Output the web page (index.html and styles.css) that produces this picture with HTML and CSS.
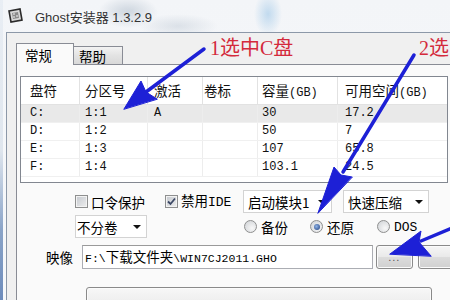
FILE: index.html
```html
<!DOCTYPE html>
<html lang="zh-CN">
<head>
  <meta charset="UTF-8" />
  <title>Ghost安装器 1.3.2.9</title>
  <link rel="stylesheet" href="styles.css">
</head>
<body>

<div class="window">
  <div class="titlebar">
    <svg class="app-icon" width="17" height="16" viewBox="0 0 17 16">
      <path d="M2 3 L13 1 L15 12 L4 14 Z" fill="#d8d8d8" stroke="#2b2b2b" stroke-width="1.6"/>
      <path d="M5 5 L11 4 L12 10 L6 11 Z" fill="#8a8a8a"/>
      <path d="M6 6 L8 6 M9 8 L11 8 M6 9 L8 9" stroke="#f2f2f2" stroke-width="1"/>
    </svg>
    <span class="title">Ghost安装器 1.3.2.9</span>
  </div>

  <div class="client">
    <div class="tabs">
      <div class="tab active">常规</div>
      <div class="tab">帮助</div>
    </div>

    <div class="page">
      <!-- 分区列表 -->
      <div class="list">
        <div class="lv-row lv-head">
          <div class="cell">盘符</div>
          <div class="cell">分区号</div>
          <div class="cell">激活</div>
          <div class="cell">卷标</div>
          <div class="cell">容量<span class="gb">(GB)</span></div>
          <div class="cell">可用空间<span class="gb">(GB)</span></div>
        </div>
        <div class="lv-row sel">
          <div class="cell">C:</div><div class="cell">1:1</div><div class="cell">A</div>
          <div class="cell"></div><div class="cell">30</div><div class="cell">17.2</div>
        </div>
        <div class="lv-row">
          <div class="cell">D:</div><div class="cell">1:2</div><div class="cell"></div>
          <div class="cell"></div><div class="cell">50</div><div class="cell">7</div>
        </div>
        <div class="lv-row">
          <div class="cell">E:</div><div class="cell">1:3</div><div class="cell"></div>
          <div class="cell"></div><div class="cell">107</div><div class="cell">65.8</div>
        </div>
        <div class="lv-row">
          <div class="cell">F:</div><div class="cell">1:4</div><div class="cell"></div>
          <div class="cell"></div><div class="cell">103.1</div><div class="cell">24.5</div>
        </div>
      </div>

      <!-- 选项 -->
      <div class="opts">
        <div class="line line-1">
          <label class="check-item w-pw"><span class="chk"></span><span class="txt">口令保护</span></label>
          <label class="check-item w-ide">
            <span class="chk">
              <svg width="9" height="9" viewBox="0 0 9 9"><path d="M1 4.5 L3.5 7 L8 1.5" fill="none" stroke="#3d4966" stroke-width="1.8"/></svg>
            </span>
            <span class="txt">禁用<span class="mono tall">IDE</span></span>
          </label>
          <div class="combo w-boot"><span>启动模块1</span><i class="caret"></i></div>
          <div class="combo w-zip"><span>快速压缩</span><i class="caret"></i></div>
        </div>

        <div class="line line-2">
          <div class="combo w-vol"><span>不分卷</span><i class="caret"></i></div>
          <label class="radio-item w-bak"><span class="radio"></span><span class="txt">备份</span></label>
          <label class="radio-item w-res"><span class="radio on"></span><span class="txt">还原</span></label>
          <label class="radio-item"><span class="radio"></span><span class="txt"><span class="mono tall">DOS</span></span></label>
        </div>

        <div class="line line-3">
          <span class="img-label">映像</span>
          <div class="path"><span class="txt"><span class="mono">F:\</span>下载文件夹<span class="mono">\WIN7CJ2011.GHO</span></span></div>
          <button class="btn btn-browse">...</button>
          <button class="btn btn-more"></button>
        </div>

        <div class="line line-4">
          <button class="btn btn-big"></button>
        </div>
      </div>
    </div>
  </div>

  <!-- 标注 -->
  <div class="note note-1">1选中C盘</div>
  <div class="note note-2">2选</div>
  <svg class="arrows" width="450" height="300" viewBox="0 0 450 300">
    <g stroke="#1d20d6" stroke-width="3.5" stroke-linecap="round" fill="#1d20d6">
      <line x1="204" y1="49" x2="146" y2="92"/>
      <polygon stroke-width="1" points="124,109 141,81 146,92 157,99"/>
      <line x1="414" y1="55" x2="343" y2="172"/>
      <polygon stroke-width="1" points="318,213 334,167 341,175 352,177"/>
      <line x1="452" y1="228" x2="421" y2="241"/>
      <polygon stroke-width="1" points="390,254 421,231 419,242 431,256"/>
    </g>
  </svg>
</div>

</body>
</html>
```

FILE: styles.css
```css
* {
  box-sizing: border-box;
}

body {
  margin: 0;
  font-family: "Noto Sans CJK SC", sans-serif;
  font-size: 13.5px;
  color: #000;
}

.window {
  position: relative;
  width: 450px;
  height: 300px;
  overflow: hidden;
  background:
    linear-gradient(to bottom, #e9eef4 0, #dfe6ee 150px, #8aa4c8 230px, #6d8cbc 300px) 0 0 / 3px 300px no-repeat,
    radial-gradient(ellipse 30px 16px at 128px 12px, rgba(165, 180, 196, 0.5), transparent),
    radial-gradient(ellipse 14px 22px at 268px 14px, rgba(160, 200, 232, 0.6), transparent),
    radial-gradient(ellipse 40px 12px at 178px 26px, rgba(190, 200, 212, 0.45), transparent),
    linear-gradient(to bottom, #f3f5f8, #f7f9fb);
}

.titlebar {
  height: 32px;
  display: flex;
  align-items: center;
  padding-left: 7px;
  gap: 11px;
}

.title {
  font-family: "Liberation Sans", "Noto Sans CJK SC", sans-serif;
  font-size: 13px;
  color: #333;
  text-shadow: 0 0 6px #fff;
}

.client {
  margin-left: 6px;
  height: 268px;
  border-left: 1px solid #8c98a8;
  border-top: 1px solid #8c98a8;
  background-color: #f0f0f0;
  padding: 10px 0 0 9px;
}

.tabs {
  display: flex;
  align-items: flex-end;
  height: 22px;
  margin-bottom: -1px;
  position: relative;
}

.tab {
  height: 18px;
  width: 50px;
  margin-bottom: 1px;
  margin-left: -1px;
  padding-left: 5px;
  border: 1px solid #898c95;
  border-bottom: none;
  background: linear-gradient(to bottom, #f3f3f3, #e3e3e3 50%, #d9d9d9);
  font-size: 13.5px;
  line-height: 18px;
}

.tab.active {
  height: 22px;
  width: 58px;
  margin: 0;
  padding-left: 8px;
  background: #fafafa;
  line-height: 22px;
  position: relative;
  z-index: 1;
}

.page {
  width: 440px;
  height: 250px;
  border: 1px solid #898c95;
  background-color: #fafafa;
  padding: 11px 0 0 3px;
}

/* 列表 */
.list {
  width: 428px;
  height: 107px;
  border: 1px solid #828790;
  background-color: #fff;
}

.lv-row {
  display: grid;
  grid-template-columns: 58px 68px 55px 55px 80px 1fr;
  height: 18px;
  line-height: 17px;
  border-bottom: 1px solid #f0f0f0;
  font-family: "Liberation Mono", monospace;
  font-size: 12px;
  color: #111;
}

.lv-row .cell + .cell {
  border-left: 1px solid #ededed;
}

.lv-row.lv-head {
  height: 28px;
  line-height: 27px;
  border-bottom: 1px solid #e2e2e2;
  font-family: "Noto Sans CJK SC", sans-serif;
  font-size: 13.5px;
}

.lv-head .cell + .cell {
  border-left-color: #e2e2e2;
}

.lv-row.sel {
  background-color: #e9e9e9;
}

.cell:nth-child(1) { padding-left: 9px; }
.cell:nth-child(2) { padding-left: 5px; }
.cell:nth-child(3) { padding-left: 6px; }
.cell:nth-child(4) { padding-left: 1px; }
.cell:nth-child(5) { padding-left: 4px; }
.cell:nth-child(6) { padding-left: 7px; }

.gb {
  font-family: "Liberation Mono", monospace;
  font-size: 12px;
}

.txt {
  font-family: "Noto Sans CJK SC", sans-serif;
  line-height: 20px;
}

.mono {
  font-family: "Liberation Mono", monospace;
  font-size: 11.5px;
}

.mono.tall {
  font-size: 13px;
}

/* 选项 */
.opts {
  padding-top: 7px;
}

.line {
  display: flex;
  align-items: center;
}

.line-1 {
  height: 23px;
  padding-left: 55px;
}

.line-2 {
  height: 23px;
  margin-top: 2px;
  padding-left: 55px;
}

.line-3 {
  height: 24px;
  margin-top: 7px;
  padding-left: 26px;
}

.line-4 {
  margin-top: 18px;
  padding-left: 66px;
}

.check-item,
.radio-item {
  display: flex;
  align-items: center;
  gap: 3px;
}

.w-pw { width: 90px; }
.w-ide { width: 78px; }
.w-bak { width: 66px; }
.w-res { width: 67px; }

.chk {
  width: 13px;
  height: 13px;
  border: 1px solid #8e8f8f;
  background: linear-gradient(135deg, #c4c8ce, #eeeeee);
  box-shadow: inset 0 0 0 1px #f3f3f3;
  display: flex;
  align-items: center;
  justify-content: center;
}

.radio {
  width: 13px;
  height: 13px;
  border-radius: 50%;
  border: 1px solid #8e8f8f;
  background: radial-gradient(circle at 65% 65%, #f8f8f8, #cdd0d4);
  display: flex;
  align-items: center;
  justify-content: center;
  margin-right: 1px;
}

.radio.on::after {
  content: "";
  width: 6px;
  height: 6px;
  border-radius: 50%;
  background: radial-gradient(circle at 40% 40%, #8fb4e8, #1d3c7a);
}

.combo {
  height: 23px;
  border: 1px solid #d3d3d3;
  background-color: #fff;
  display: flex;
  align-items: center;
  justify-content: space-between;
  padding: 0 5px 0 4px;
}

.w-boot { width: 89px; margin-left: 0; }
.w-zip { width: 86px; margin-left: 11px; }
.w-vol { width: 72px; padding-left: 1px; margin-right: 97px; }

.caret {
  width: 0;
  height: 0;
  border-left: 4px solid transparent;
  border-right: 4px solid transparent;
  border-top: 4px solid #111;
}

.img-label {
  width: 39px;
}

.path {
  width: 314px;
  height: 24px;
  border: 1px solid #abadb3;
  border-top-color: #9a9a9a;
  background-color: #fff;
  padding-left: 2px;
  display: flex;
  align-items: center;
}

.btn {
  height: 24px;
  border: 1px solid #8a8a8a;
  border-radius: 3px;
  background: linear-gradient(to bottom, #f6f6f6, #e9e9e9 50%, #dcdcdc 51%, #d0d0d0);
  box-shadow: inset 0 0 0 1px #fbfbfb;
  padding: 0;
  font-family: "Liberation Sans", sans-serif;
  font-size: 11px;
  color: #555;
}

.btn-browse {
  width: 40px;
  margin-left: 3px;
  letter-spacing: 1px;
}

.btn-more {
  width: 40px;
  margin-left: 5px;
}

.btn-big {
  width: 346px;
  height: 36px;
  background: linear-gradient(to bottom, #f7f7f7, #ececec 50%, #e2e2e2 51%, #dadada);
}

/* 标注 */
.note {
  position: absolute;
  top: 36px;
  font-family: "Liberation Serif", "Noto Sans CJK SC", serif;
  font-size: 20px;
  line-height: 24px;
  color: #d42a3c;
}

.note-1 { left: 210px; }
.note-2 { left: 419px; }

.arrows {
  position: absolute;
  left: 0;
  top: 0;
  pointer-events: none;
}
```
